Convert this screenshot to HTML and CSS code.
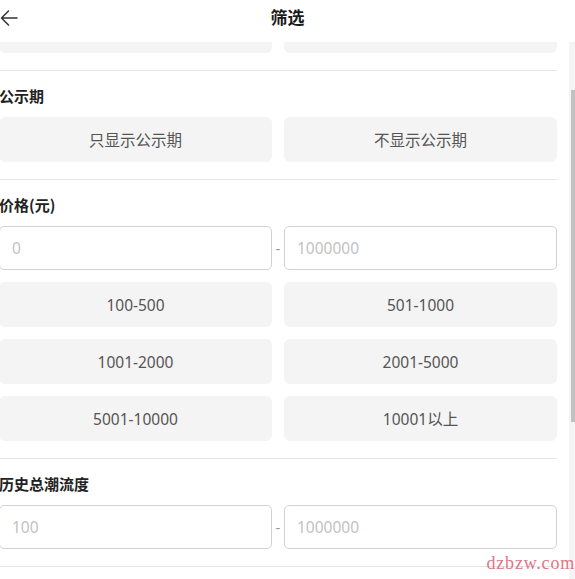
FILE: index.html
```html
<!DOCTYPE html>
<html lang="zh-CN">
<head>
    <meta charset="UTF-8">
    <meta name="viewport" content="width=device-width, initial-scale=1.0">
    <title>筛选</title>
    <link rel="stylesheet" href="styles.css">
</head>
<body>
    <div class="header">
        <button class="back" aria-label="返回">
            <svg width="18" height="18" viewBox="0 0 18 18" fill="none" stroke="#333" stroke-width="1.5" stroke-linecap="round" stroke-linejoin="round">
                <path d="M17 9H1.5M8.5 2 1.5 9l7 7"/>
            </svg>
        </button>
        <h1>筛选</h1>
    </div>

    <div class="body">
        <div class="content">
            <div class="filter">
                <!-- tail of the group scrolled past -->
                <div class="group group-tail">
                    <div class="options">
                        <div class="option"></div>
                        <div class="option"></div>
                    </div>
                </div>

                <div class="group">
                    <div class="label">公示期</div>
                    <div class="options">
                        <button class="option">只显示公示期</button>
                        <button class="option">不显示公示期</button>
                    </div>
                </div>

                <div class="group">
                    <div class="label">价格(元)</div>
                    <div class="range">
                        <input class="field" type="text" placeholder="0">
                        <span class="dash">-</span>
                        <input class="field" type="text" placeholder="1000000">
                    </div>
                    <div class="options">
                        <button class="option">100-500</button>
                        <button class="option">501-1000</button>
                        <button class="option">1001-2000</button>
                        <button class="option">2001-5000</button>
                        <button class="option">5001-10000</button>
                        <button class="option">10001以上</button>
                    </div>
                </div>

                <div class="group">
                    <div class="label">历史总潮流度</div>
                    <div class="range">
                        <input class="field" type="text" placeholder="100">
                        <span class="dash">-</span>
                        <input class="field" type="text" placeholder="1000000">
                    </div>
                </div>
            </div>
        </div>

        <div class="scroll-track">
            <div class="scroll-thumb"></div>
        </div>
    </div>

    <div class="mark">dzbzw.com</div>
</body>
</html>
```

FILE: styles.css
```css
* {
    box-sizing: border-box;
}

body {
    margin: 0;
    height: 100vh;
    display: flex;
    flex-direction: column;
    overflow: hidden;
    background-color: #fff;
    color: #222;
    font-family: "Noto Sans", "Noto Sans CJK SC", sans-serif;
}

.header {
    height: 42px;
    flex-shrink: 0;
    display: flex;
    align-items: center;
    justify-content: center;
    position: relative;
    background-color: #fff;
}

.back {
    position: absolute;
    left: 0;
    top: 9px;
    padding: 0;
    border: none;
    background: none;
    display: flex;
    cursor: pointer;
}

.header h1 {
    margin: 0 0 9px 0;
    font-size: 17px;
    font-weight: bold;
    font-family: "Noto Sans CJK SC", sans-serif;
    color: #1a1a1a;
}

.body {
    flex: 1;
    display: flex;
    min-height: 0;
}

.content {
    flex: 1;
    overflow: hidden;
}

.scroll-track {
    width: 6px;
    display: flex;
    flex-direction: column;
    align-items: flex-end;
    background-color: #f4f4f4;
}

.scroll-thumb {
    width: 4px;
    height: 332px;
    margin-top: 48px;
    background-color: #c1c1c1;
}

.filter {
    margin: 0 12px 0 -1px;
}

.group {
    padding: 14px 0 17px;
    border-bottom: 1px solid #e6e6e6;
    display: flex;
    flex-direction: column;
    gap: 12px;
}

.group-tail {
    padding-top: 0;
}

.group-tail .option {
    height: 11px;
    border-radius: 0 0 6px 6px;
}

.label {
    font-size: 15px;
    font-weight: bold;
    line-height: 22px;
    margin-bottom: -2px;
    font-family: "Noto Sans CJK SC", sans-serif;
    color: #222;
}

.options {
    display: grid;
    grid-template-columns: 1fr 1fr;
    gap: 12px;
}

.option {
    height: 45px;
    border: none;
    border-radius: 6px;
    background-color: #f4f4f4;
    color: #555;
    font-size: 15.5px;
    font-family: "Noto Sans", "Noto Sans CJK SC", sans-serif;
    cursor: pointer;
}

.range {
    display: grid;
    grid-template-columns: 1fr 12px 1fr;
    align-items: center;
}

.field {
    height: 44px;
    min-width: 0;
    padding: 0 12px;
    border: 1px solid #d2d2d2;
    border-radius: 5px;
    font-size: 15.5px;
    font-family: "Noto Sans", "Noto Sans CJK SC", sans-serif;
    color: #333;
    outline: none;
}

.field::placeholder {
    color: #c2c2c2;
}

.dash {
    text-align: center;
    font-size: 15px;
    color: #999;
}

.mark {
    position: absolute;
    right: 0;
    bottom: 5px;
    font-family: "Liberation Serif", serif;
    font-size: 18px;
    letter-spacing: 0.8px;
    color: #e07585;
    pointer-events: none;
}
```
